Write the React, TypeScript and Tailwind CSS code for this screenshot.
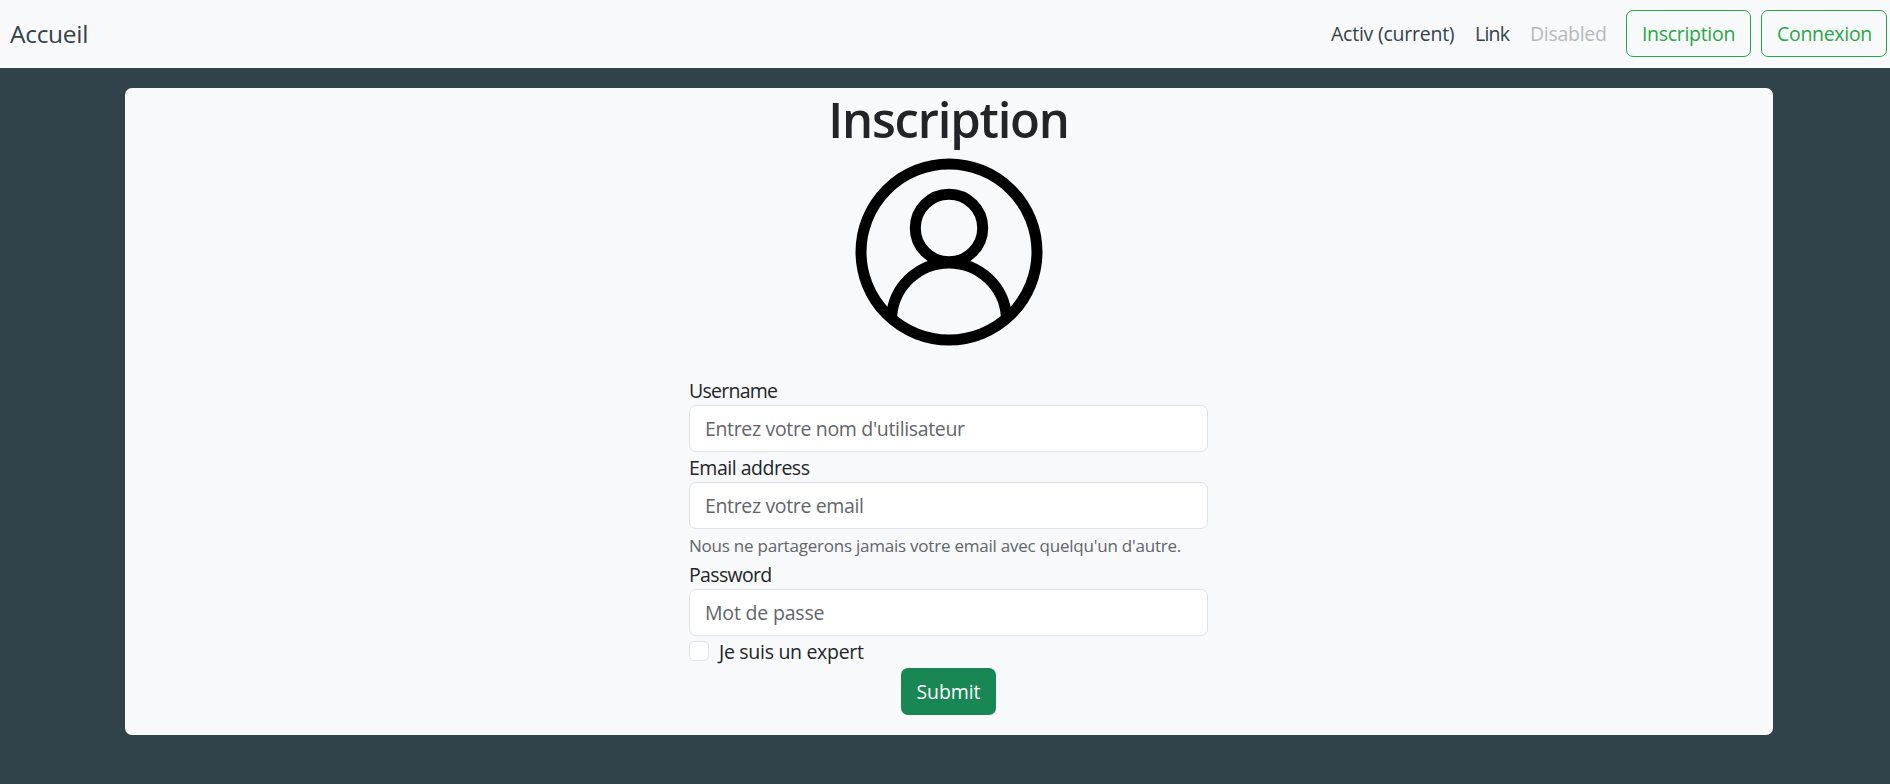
import type { ReactNode } from "react";

function UserIcon() {
  return (
    <svg viewBox="0 0 188 188" className="mx-auto block h-[188px] w-[188px]" fill="none" stroke="#000" strokeWidth="11">
      <circle cx="94" cy="94" r="88" />
      <circle cx="94" cy="70" r="33.7" />
      <path d="M36.600 159A57.500 57.500 0 0 1 151.400 159" />
    </svg>
  );
}

function OutlineButton({ children, className }: { children: ReactNode; className: string }) {
  return (
    <button type="button" className={`flex h-[47px] items-center justify-center rounded-[7px] border border-[#28a745] text-[#28a745] ${className}`}>
      {children}
    </button>
  );
}

function FieldLabel({ htmlFor, children, className }: { htmlFor: string; children: ReactNode; className: string }) {
  return (
    <label htmlFor={htmlFor} className={`block h-[30px] leading-[32px] ${className}`}>
      {children}
    </label>
  );
}

const inputClass =
  "block h-[47px] w-full rounded-[7px] border border-[#dee2e6] bg-white px-[15px] text-[#212529] outline-none placeholder:text-[#5f656b] placeholder:opacity-100";

export default function App() {
  return (
    <div className="min-h-screen bg-[#32424a] font-['Open_Sans','Noto_Sans',sans-serif] text-[19.5px] leading-[30px] text-[#212529]">
      <nav className="flex h-[68px] items-start justify-between bg-[#f8f9fa] pt-[10px] pr-[3px] pl-[10px] text-[#32424a]">
        <a className="pt-[5px] text-[24.5px] leading-[38px] tracking-[-0.3px]">Accueil</a>
        <div className="flex items-center">
          <a className="w-[144px] tracking-[-0.24px]">Activ (current)</a>
          <a className="w-[55px] tracking-[-0.75px]">Link</a>
          <a className="w-[96px] tracking-[-0.3px] text-[#b5b9bc]">Disabled</a>
          <OutlineButton className="mr-[10px] w-[125px] tracking-[-0.3px]">Inscription</OutlineButton>
          <OutlineButton className="w-[126px] pl-px tracking-[-0.3px]">Connexion</OutlineButton>
        </div>
      </nav>

      <main className="mt-5 ml-[125px] h-[647px] w-[1648px] rounded-[7px] bg-[#f8f9fa] pr-px">
        <h1 className="h-[70px] pt-px text-center text-[49px] leading-[60px] font-[560] tracking-[-1.2px]">Inscription</h1>
        <UserIcon />
        <form className="mx-auto mt-[29px] w-[519px]">
          <FieldLabel htmlFor="username" className="tracking-[-0.75px]">Username</FieldLabel>
          <input id="username" className={`${inputClass} tracking-[-0.34px]`} placeholder="Entrez votre nom d'utilisateur" />
          <FieldLabel htmlFor="email" className="tracking-[-0.49px]">Email address</FieldLabel>
          <input id="email" className={`${inputClass} tracking-[-0.35px]`} placeholder="Entrez votre email" />
          <small className="block h-[30px] pt-[4px] text-[17px] leading-[25px] tracking-[-0.23px] text-[#5f656b]">
            Nous ne partagerons jamais votre email avec quelqu'un d'autre.
          </small>
          <FieldLabel htmlFor="password" className="tracking-[-0.66px]">Password</FieldLabel>
          <input id="password" type="password" className={`${inputClass} tracking-[-0.19px]`} placeholder="Mot de passe" />
          <div className="flex h-8 items-start">
            <input id="expert" type="checkbox" className="mt-[5px] h-5 w-5 appearance-none rounded-[5px] border border-[#dee2e6] bg-white" />
            <FieldLabel htmlFor="expert" className="ml-[10px] tracking-[-0.3px]">Je suis un expert</FieldLabel>
          </div>
          <button type="submit" className="mx-auto flex h-[47px] w-[95px] items-center justify-center rounded-[7px] bg-[#198754] pt-px tracking-[-0.1px] text-white">
            Submit
          </button>
        </form>
      </main>
    </div>
  );
}
